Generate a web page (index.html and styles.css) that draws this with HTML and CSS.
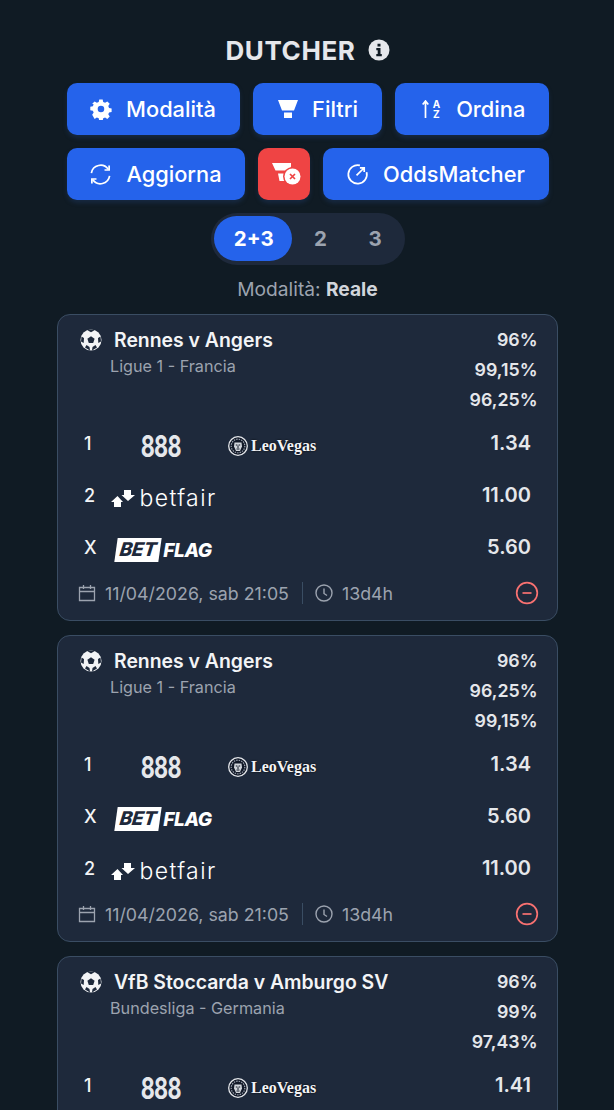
FILE: index.html
```html
<!DOCTYPE html>
<html lang="it">
<head>
    <meta charset="UTF-8">
    <meta name="viewport" content="width=device-width, initial-scale=1.0">
    <title>Dutcher</title>
    <link rel="stylesheet" href="styles.css">
</head>
<body>
    <svg class="defs" width="0" height="0">
        <symbol id="i-ball" viewBox="0 0 22 22">
            <circle cx="11" cy="11" r="10.500" fill="#f3f4f6"/>
            <path d="M11 7.200l3.600 2.600-1.400 4.200H8.800L7.400 9.800z" fill="#1e293b"/>
            <path d="M7.500 1.300L11 3.200l3.500-1.900L11 .4zM1.500 7.500L1 12.500l2.700 1.600L4 9zM20.500 7.500L21 12.500l-2.700 1.600L18 9zM5 18.500l5 3-.5-3.500L6.500 16zM17 18.500l-5 3 .5-3.500 3-2z" fill="#1e293b"/>
        </symbol>
        <symbol id="i-cal" viewBox="0 0 18 18">
            <path d="M1.500 3.500h15v13h-15zM1.500 7.500h15M5.500 1v4M12.500 1v4" fill="none" stroke="currentColor" stroke-width="1.300"/>
        </symbol>
        <symbol id="i-clock" viewBox="0 0 18 18">
            <circle cx="9" cy="9" r="8" fill="none" stroke="currentColor" stroke-width="1.400"/>
            <path d="M9 4.500V9.500l3 2" fill="none" stroke="currentColor" stroke-width="1.400"/>
        </symbol>
        <symbol id="i-minus" viewBox="0 0 24 24">
            <circle cx="12" cy="12" r="10.300" fill="none" stroke="currentColor" stroke-width="1.700"/>
            <path d="M7.500 12h9" fill="none" stroke="currentColor" stroke-width="1.700"/>
        </symbol>
        <symbol id="i-lion" viewBox="0 0 20 20">
            <circle cx="10" cy="10" r="9.300" fill="#111827" stroke="#e5e7eb" stroke-width="1.300"/>
            <circle cx="10" cy="10" r="6.800" fill="none" stroke="#9ca3af" stroke-width="1.200" stroke-dasharray="1.500 1"/>
            <path d="M6.500 6.500h7l.5 4-2 4.500H8L6 10.500z" fill="#d1d5db"/>
            <path d="M7.800 9h1.600M10.600 9h1.600M10 9.500v2.500M8.500 13h3" fill="none" stroke="#111827" stroke-width="1"/>
        </symbol>
        <symbol id="i-betfair" viewBox="0 0 24 17">
            <path fill="#fff" d="M0 12l6.500-6 5.500 6h-2v5H3v-5zM13 0h7v5h4l-7 6-6.500-6H13z"/>
        </symbol>
    </svg>

    <div class="page">
        <h1 class="title">DUTCHER
            <svg class="info" viewBox="0 0 22 22" width="22" height="22">
                <circle cx="11" cy="11" r="10.500" fill="#e5e7eb"/>
                <path d="M9.500 4.800h3v2.700h-3zM8.300 9h4.200v6h1.300v2.200H8.300V15h1.400v-3.800H8.300z" fill="#101b24"/>
            </svg>
        </h1>

        <div class="btn-row">
            <button class="btn btn-mod">
                <svg viewBox="0 0 22 22" width="22" height="22">
                    <path fill="#fff" fill-rule="evenodd" d="M9 0h4l.6 3 2.200.9 2.600-1.700 2.800 2.800-1.700 2.600.9 2.200 3 .6v4l-3 .6-.9 2.200 1.700 2.600-2.800 2.800-2.600-1.700-2.200.9-.6 3H9l-.6-3-2.200-.9-2.600 1.700L.8 17.800l1.700-2.600-.9-2.200-3-.6v-4l3-.6.9-2.200L.8 5 3.600 2.200l2.600 1.700 2.200-.9zM11 7.200a3.800 3.800 0 1 0 0 7.600 3.800 3.800 0 0 0 0-7.600z" transform="translate(1.500 1.500) scale(.86)"/>
                </svg>
                Modalità
            </button>
            <button class="btn btn-filter">
                <svg viewBox="0 0 20 18" width="20" height="18">
                    <path fill="#fff" d="M0 0h20l-4 10.500H4zM6 12.500h8V18H6z"/>
                </svg>
                Filtri
            </button>
            <button class="btn btn-sort">
                <span class="sort-icon">
                    <svg viewBox="0 0 7 18" width="7" height="18">
                        <path d="M3.500 18V1.500M.7 4.500L3.500 1l2.800 3.500" fill="none" stroke="#fff" stroke-width="1.700"/>
                    </svg>
                    <span class="sort-az">A<br>Z</span>
                </span>
                Ordina
            </button>
        </div>

        <div class="btn-row">
            <button class="btn btn-upd">
                <svg viewBox="0 0 24 24" width="23" height="23">
                    <path d="M2.500 10.500A9.700 9.700 0 0 1 20 6.500M21.500 13.500A9.700 9.700 0 0 1 4 17.500" fill="none" stroke="#fff" stroke-width="1.800"/>
                    <path d="M21 2.500v4.800h-4.800M3 21.500v-4.800h4.800" fill="none" stroke="#fff" stroke-width="1.800"/>
                </svg>
                Aggiorna
            </button>
            <button class="btn btn-off">
                <svg viewBox="0 0 30 23" width="30" height="23">
                    <path fill="#fff" d="M0 0h19v3.500l-2 4H3.500zM6 10.500h12V18H7.500z"/>
                    <circle cx="20.500" cy="13.500" r="9.500" fill="#ef4444"/>
                    <circle cx="20.500" cy="13.500" r="8" fill="#fff"/>
                    <path d="M18 11l5 5M23 11l-5 5" stroke="#ef4444" stroke-width="1.700"/>
                </svg>
            </button>
            <button class="btn btn-odds">
                <svg viewBox="0 0 24 24" width="23" height="23">
                    <path d="M14.500 2.500A9.700 9.700 0 1 0 21.500 9.500" fill="none" stroke="#fff" stroke-width="1.800"/>
                    <path d="M11 13l7-7M14.500 5H19v4.500" fill="none" stroke="#fff" stroke-width="1.800"/>
                </svg>
                OddsMatcher
            </button>
        </div>

        <div class="toggle-wrap">
            <div class="toggle">
                <span class="toggle-item active">2+3</span>
                <span class="toggle-item">2</span>
                <span class="toggle-item">3</span>
            </div>
        </div>

        <p class="mode">Modalità: <strong>Reale</strong></p>

        <div class="card">
            <div class="card-head">
                <div>
                    <div class="match"><svg class="ball"><use href="#i-ball"/></svg>Rennes v Angers</div>
                    <div class="league">Ligue 1 - Francia</div>
                </div>
                <div class="percents">
                    <div>96%</div>
                    <div>99,15%</div>
                    <div>96,25%</div>
                </div>
            </div>
            <div class="row">
                <span class="sign">1</span>
                <div class="book"><span class="l-888">888</span></div>
                <div class="book2">
                    <span class="l-leo"><svg class="lion"><use href="#i-lion"/></svg>LeoVegas</span>
                </div>
                <span class="odd">1.34</span>
            </div>
            <div class="row">
                <span class="sign">2</span>
                <div class="book"><span class="l-betfair"><svg class="bf-icon"><use href="#i-betfair"/></svg>betfair</span></div>
                <span class="odd">11.00</span>
            </div>
            <div class="row">
                <span class="sign">X</span>
                <div class="book"><span class="l-betflag"><span class="flag-box">BET</span>FLAG</span></div>
                <span class="odd">5.60</span>
            </div>
            <div class="card-foot">
                <svg class="ico"><use href="#i-cal"/></svg>
                <span>11/04/2026, sab 21:05</span>
                <span class="sep"></span>
                <svg class="ico"><use href="#i-clock"/></svg>
                <span>13d4h</span>
                <svg class="minus"><use href="#i-minus"/></svg>
            </div>
        </div>

        <div class="card">
            <div class="card-head">
                <div>
                    <div class="match"><svg class="ball"><use href="#i-ball"/></svg>Rennes v Angers</div>
                    <div class="league">Ligue 1 - Francia</div>
                </div>
                <div class="percents">
                    <div>96%</div>
                    <div>96,25%</div>
                    <div>99,15%</div>
                </div>
            </div>
            <div class="row">
                <span class="sign">1</span>
                <div class="book"><span class="l-888">888</span></div>
                <div class="book2">
                    <span class="l-leo"><svg class="lion"><use href="#i-lion"/></svg>LeoVegas</span>
                </div>
                <span class="odd">1.34</span>
            </div>
            <div class="row">
                <span class="sign">X</span>
                <div class="book"><span class="l-betflag"><span class="flag-box">BET</span>FLAG</span></div>
                <span class="odd">5.60</span>
            </div>
            <div class="row">
                <span class="sign">2</span>
                <div class="book"><span class="l-betfair"><svg class="bf-icon"><use href="#i-betfair"/></svg>betfair</span></div>
                <span class="odd">11.00</span>
            </div>
            <div class="card-foot">
                <svg class="ico"><use href="#i-cal"/></svg>
                <span>11/04/2026, sab 21:05</span>
                <span class="sep"></span>
                <svg class="ico"><use href="#i-clock"/></svg>
                <span>13d4h</span>
                <svg class="minus"><use href="#i-minus"/></svg>
            </div>
        </div>

        <div class="card">
            <div class="card-head">
                <div>
                    <div class="match"><svg class="ball"><use href="#i-ball"/></svg>VfB Stoccarda v Amburgo SV</div>
                    <div class="league">Bundesliga - Germania</div>
                </div>
                <div class="percents">
                    <div>96%</div>
                    <div>99%</div>
                    <div>97,43%</div>
                </div>
            </div>
            <div class="row">
                <span class="sign">1</span>
                <div class="book"><span class="l-888">888</span></div>
                <div class="book2">
                    <span class="l-leo"><svg class="lion"><use href="#i-lion"/></svg>LeoVegas</span>
                </div>
                <span class="odd">1.41</span>
            </div>
        </div>
    </div>
</body>
</html>
```

FILE: styles.css
```css
* {
    box-sizing: border-box;
}
html, body {
    margin: 0;
    padding: 0;
    background-color: #101b24;
}
body {
    font-family: Inter, "Liberation Sans", sans-serif;
    color: #e5e7eb;
}
.defs {
    position: absolute;
}
.page {
    height: 1110px;
    overflow: hidden;
    padding: 34px 56px 0 57px;
}
.title {
    display: flex;
    justify-content: center;
    align-items: center;
    gap: 12px;
    margin: 0 0 17px;
    height: 32px;
    font-size: 26px;
    font-weight: 700;
    letter-spacing: 0.6px;
    color: #e5e7eb;
}

/* botoes */
.btn-row {
    display: flex;
    justify-content: center;
    gap: 13px;
    margin-bottom: 13px;
}
.btn {
    display: flex;
    align-items: center;
    justify-content: center;
    gap: 14px;
    height: 52px;
    padding: 0;
    font-family: inherit;
    font-size: 21.800px;
    font-weight: 500;
    color: #fff;
    background-color: #2563eb;
    border: none;
    border-radius: 10px;
    box-shadow: 0 3px 4px rgba(30, 58, 100, 0.45);
}
.btn-mod { width: 173px; }
.btn-filter { width: 129px; padding-left: 2px; }
.btn-sort { width: 154px; gap: 16px; padding-left: 4px; }
.btn-upd { width: 178px; }
.btn-off { width: 52px; padding-left: 7px; background-color: #ef4444; }
.btn-odds { width: 226px; }
.sort-icon {
    display: flex;
    align-items: center;
    gap: 4px;
}
.sort-az {
    font-size: 10px;
    line-height: 10px;
    font-weight: 700;
}

/* seletor */
.toggle-wrap {
    display: flex;
    justify-content: center;
    margin-bottom: 13px;
}
.toggle {
    display: flex;
    width: 194px;
    height: 52px;
    padding: 3px;
    background-color: #1e293b;
    border-radius: 26px;
}
.toggle-item {
    display: flex;
    align-items: center;
    justify-content: center;
    width: 55px;
    height: 45px;
    padding-left: 2px;
    font-size: 20.500px;
    font-weight: 700;
    color: #9ca3af;
}
.toggle-item.active {
    width: 79px;
    color: #fff;
    background-color: #2563eb;
    border-radius: 23px;
}
.mode {
    margin: 0 0 14px;
    text-align: center;
    font-size: 19.200px;
    line-height: 22px;
    color: #9ca3af;
}
.mode strong {
    font-weight: 700;
    color: #d1d5db;
}

/* cards */
.card {
    height: 307px;
    margin-bottom: 14px;
    padding: 10px 19.500px 0 20px;
    background-color: #1e293b;
    border: 1.5px solid #3a4d63;
    border-radius: 13px;
}
.card-head {
    display: flex;
    justify-content: space-between;
    height: 90px;
    margin-bottom: 5px;
}
.match {
    display: flex;
    align-items: center;
    gap: 12px;
    height: 30px;
    padding-left: 2px;
    font-size: 19.400px;
    font-weight: 600;
    color: #f3f4f6;
}
.ball {
    width: 22px;
    height: 22px;
    flex: none;
}
.league {
    padding-left: 32px;
    padding-top: 1px;
    font-size: 16.200px;
    line-height: 20px;
    color: #9ca3af;
}
.percents {
    text-align: right;
    font-size: 17.800px;
    font-weight: 600;
    line-height: 30px;
    color: #e5e7eb;
}
.row {
    display: flex;
    align-items: center;
    height: 52px;
    padding: 0 6.500px 0 6px;
}
.sign {
    width: 26px;
    flex: none;
    margin-bottom: 5px;
    font-size: 18px;
    font-weight: 500;
    color: #f3f4f6;
}
.book {
    display: flex;
    justify-content: center;
    width: 108px;
    flex: none;
}
.book2 {
    margin-left: 10px;
}
.odd {
    margin-left: auto;
    margin-bottom: 6px;
    font-size: 20px;
    font-weight: 600;
    color: #e5e7eb;
}
.card-foot {
    display: flex;
    align-items: center;
    height: 28px;
    margin-top: 3px;
    font-size: 17.800px;
    color: #9ca3af;
}
.ico {
    width: 18px;
    height: 18px;
    margin-right: 9px;
    flex: none;
}
.sep {
    width: 1px;
    height: 22px;
    margin: 0 12px 0 13px;
    background-color: #3a4d63;
}
.minus {
    width: 24px;
    height: 24px;
    margin-left: auto;
    margin-right: -1px;
    color: #f87171;
}

/* logos das casas */
.l-888 {
    margin-right: 7px;
    font-size: 30px;
    font-weight: 700;
    line-height: 30px;
    letter-spacing: -1px;
    color: #e5e7eb;
    transform: scaleX(0.72);
}
.l-leo {
    display: flex;
    align-items: center;
    gap: 3px;
    font-family: "Liberation Serif", serif;
    font-size: 16px;
    font-weight: 700;
    color: #f3f4f6;
    text-shadow: 0 0 2px #000;
}
.lion {
    width: 20px;
    height: 20px;
}
.bf-icon {
    width: 24px;
    height: 17px;
    flex: none;
}
.l-betfair {
    display: flex;
    align-items: center;
    gap: 4px;
    font-size: 23px;
    font-weight: 300;
    letter-spacing: 1.400px;
    line-height: 26px;
    color: #fff;
}
.l-betflag {
    display: flex;
    align-items: center;
    font-size: 19px;
    font-weight: 800;
    font-style: italic;
    letter-spacing: -0.3px;
    color: #fff;
}
.flag-box {
    width: 44px;
    margin-right: 3px;
    text-align: center;
    line-height: 24px;
    color: #1e293b;
    background-color: #fff;
    transform: skewX(-8deg);
}
```
